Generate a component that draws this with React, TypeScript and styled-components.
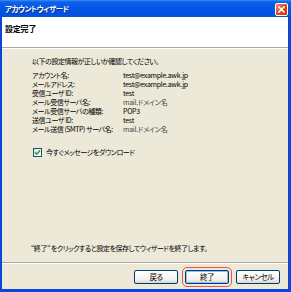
import React from "react";
import styled, { createGlobalStyle } from "styled-components";

const Global = createGlobalStyle`
  html, body { margin: 0; padding: 0; background: #fff; }
  body { font-family: "Noto Sans CJK JP", "Liberation Sans", sans-serif; }
`;

const Window = styled.div`
  width: 291px;
  height: 292px;
  display: flex;
  flex-direction: column;
  box-sizing: border-box;
  font-family: "Noto Sans CJK JP", "Liberation Sans", sans-serif;
  font-feature-settings: "palt";
  font-size: 7px;
  letter-spacing: -0.45px;
  color: #000;
`;

const TitleBar = styled.div`
  height: 17px;
  flex: none;
  display: flex;
  align-items: center;
  justify-content: space-between;
  padding: 0 3px 0 5px;
  background: linear-gradient(#3c8cf8 0, #0b62ea 2px, #0458e6 45%, #0350dc 100%);
  color: #fff;
  font-weight: bold;
  font-size: 7.5px;
  letter-spacing: -0.5px;
  box-sizing: border-box;
`;

const TitleText = styled.span`
  text-shadow: 1px 1px 0 #0a2a80;
`;

const CloseButton = styled.div`
  width: 13px;
  height: 13px;
  margin-top: 1px;
  border: 1px solid #fff;
  border-radius: 2px;
  box-sizing: border-box;
  background: linear-gradient(135deg, #f0906e, #e0481e 50%, #c83410);
  display: flex;
  align-items: center;
  justify-content: center;
`;

const Frame = styled.div`
  flex: 1;
  display: flex;
  flex-direction: column;
  border-left: 2px solid #0a46d8;
  border-right: 3px solid #0a46d8;
  border-bottom: 3px solid #0a46d8;
  min-height: 0;
`;

const Header = styled.div`
  height: 31px;
  flex: none;
  background: #fff;
  border-bottom: 1px solid #aca899;
  padding: 6px 0 0 3px;
  box-sizing: border-box;
  font-weight: bold;
  font-size: 8px;
  letter-spacing: -0.2px;
`;

const Body = styled.div`
  flex: 1;
  display: flex;
  flex-direction: column;
  background: #ece9d8;
  padding: 8px 0 0 30px;
  border-top: 1px solid #fff;
  line-height: 9px;
`;

const Intro = styled.div`
  margin-bottom: 5px;
`;

const InfoGrid = styled.div`
  display: grid;
  grid-template-columns: 91px auto;
  grid-auto-rows: 9px;
  white-space: nowrap;
`;

const Value = styled.span<{ $muted?: boolean }>`
  color: ${(p) => (p.$muted ? "#4a4a4a" : "#000")};
  letter-spacing: -0.3px;
`;

const CheckRow = styled.label`
  display: flex;
  align-items: center;
  gap: 4px;
  margin-top: 14px;
  margin-left: 1px;
`;

const CheckBox = styled.span`
  width: 9px;
  height: 9px;
  box-sizing: border-box;
  border: 1px solid #1c5180;
  background: linear-gradient(135deg, #dcdcd7, #fff);
  display: flex;
  align-items: center;
  justify-content: center;
`;

const Note = styled.div`
  margin-top: auto;
  margin-bottom: 9px;
  margin-left: -1px;
`;

const Footer = styled.div`
  flex: none;
  height: 27px;
  background: #ece9d8;
  border-top: 1px solid #aca899;
  box-shadow: inset 0 1px 0 #fff;
  display: flex;
  justify-content: flex-end;
  align-items: flex-start;
  gap: 7px;
  padding: 7px 8px 0 0;
  box-sizing: border-box;
`;

const Button = styled.button<{ $default?: boolean }>`
  width: 44px;
  height: 14px;
  padding: 0;
  border: 1px solid #003c74;
  border-radius: 2px;
  background: linear-gradient(#ffffff, #f3f2ee 70%, #d9d5c9);
  font-family: inherit;
  font-feature-settings: "palt";
  font-size: 7.5px;
  letter-spacing: -0.5px;
  line-height: 12px;
  color: #000;
  box-shadow: ${(p) => (p.$default ? "inset 0 0 0 1px #9bbbf0" : "none")};
  outline: ${(p) => (p.$default ? "1px solid #e8554e" : "none")};
  outline-offset: 2px;
`;

const rows: [string, string, boolean?][] = [
  ["アカウント名:", "test@example.awk.jp"],
  ["メールアドレス:", "test@example.awk.jp"],
  ["受信ユーザ ID:", "test"],
  ["メール受信サーバ名:", "mail.ドメイン名", true],
  ["メール受信サーバの種類:", "POP3"],
  ["送信ユーザ ID:", "test"],
  ["メール送信 (SMTP) サーバ名:", "mail.ドメイン名", true],
];

export default function App() {
  return (
    <Window>
      <Global />
      <TitleBar>
        <TitleText>アカウントウィザード</TitleText>
        <CloseButton>
          <svg width="7" height="7" viewBox="0 0 7 7">
            <path d="M1 1L6 6M6 1L1 6" stroke="#fff" strokeWidth="1.6" strokeLinecap="square" />
          </svg>
        </CloseButton>
      </TitleBar>
      <Frame>
        <Header>設定完了</Header>
        <Body>
          <Intro>以下の設定情報が正しいか確認してください。</Intro>
          <InfoGrid>
            {rows.map(([k, v, m]) => (
              <React.Fragment key={k}>
                <span>{k}</span>
                <Value $muted={m}>{v}</Value>
              </React.Fragment>
            ))}
          </InfoGrid>
          <CheckRow>
            <CheckBox>
              <svg width="7" height="7" viewBox="0 0 7 7">
                <path d="M1 3.3L2.8 5.2L6 1.6" stroke="#21a121" strokeWidth="1.5" fill="none" />
              </svg>
            </CheckBox>
            今すぐメッセージをダウンロード
          </CheckRow>
          <Note>“終了” をクリックすると設定を保存してウィザードを終了します。</Note>
        </Body>
        <Footer>
          <Button>戻る</Button>
          <Button $default>終了</Button>
          <Button>キャンセル</Button>
        </Footer>
      </Frame>
    </Window>
  );
}
